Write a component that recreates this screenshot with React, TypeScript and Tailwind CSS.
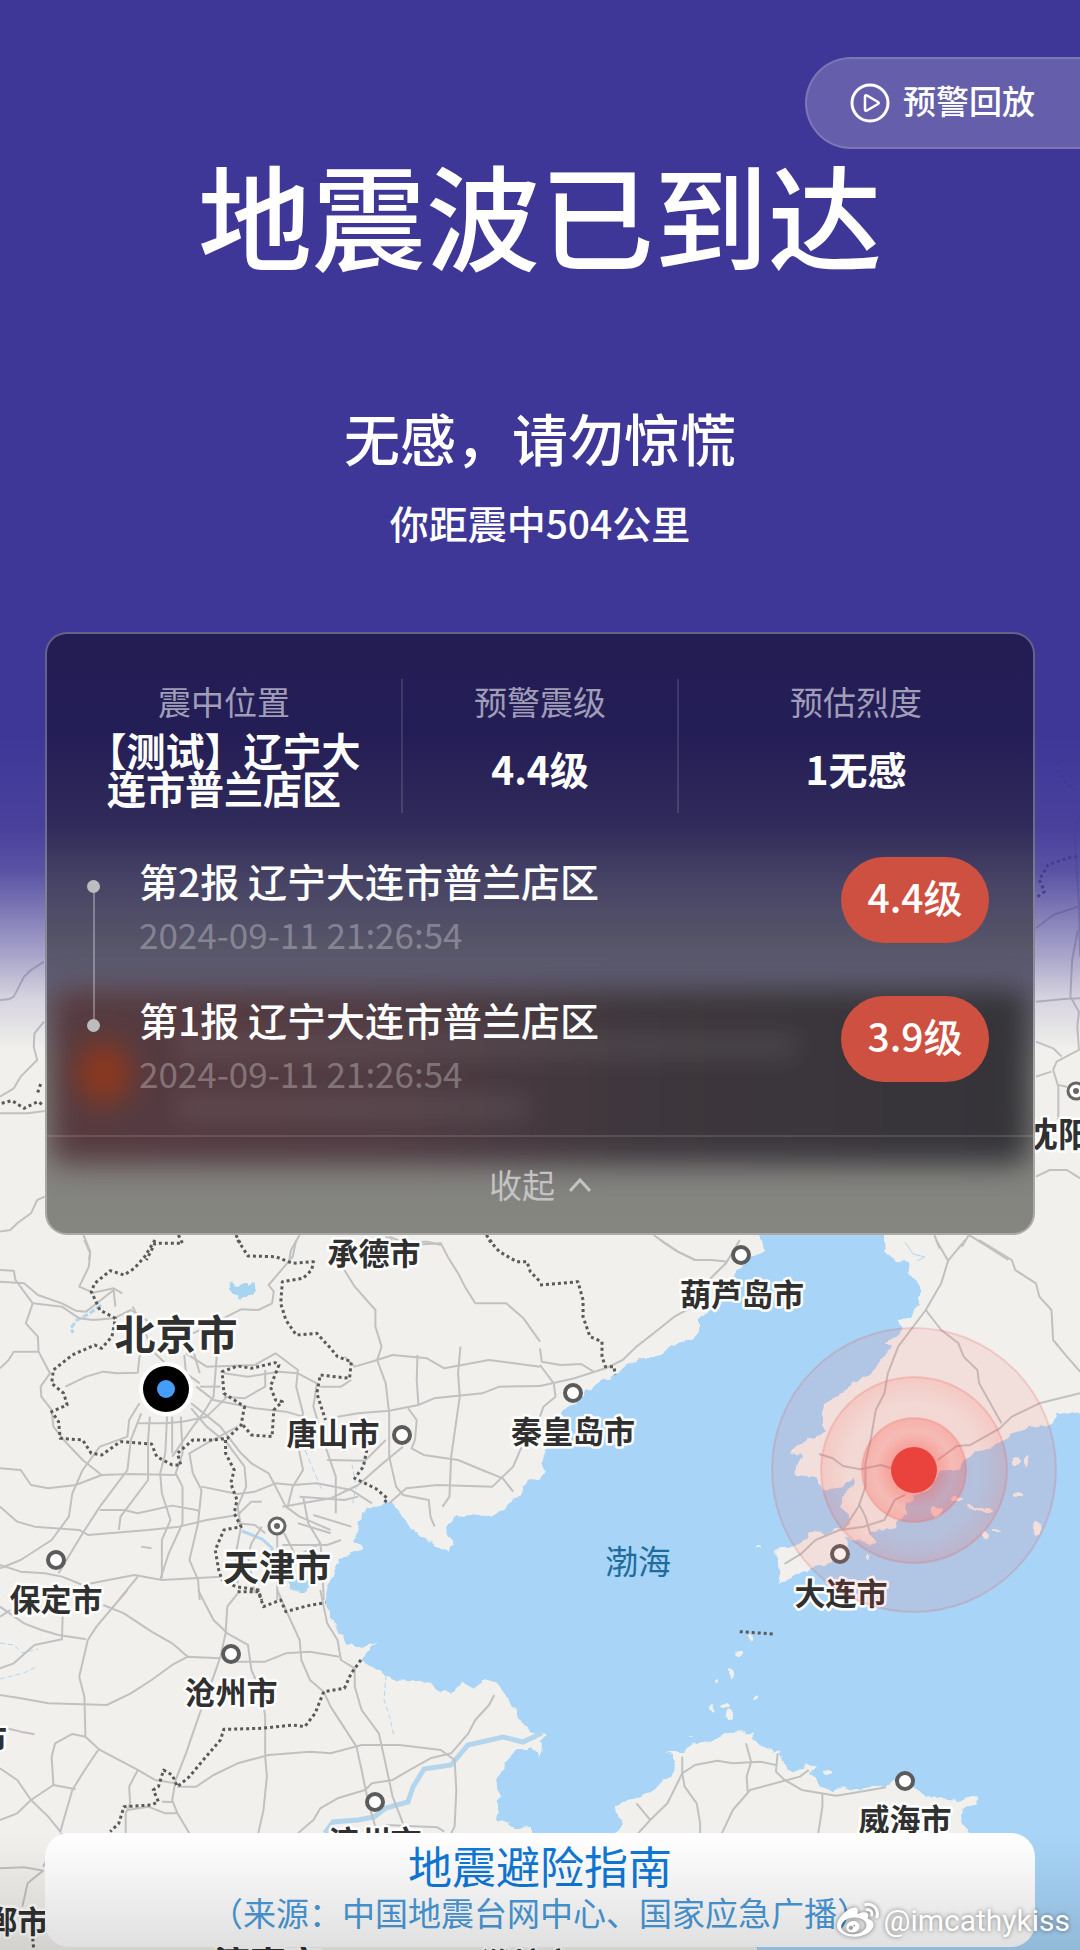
import React from "react";
import { FaWeibo } from "react-icons/fa";

type Sheet = { x: number; y: number; roads: string[]; borders: string[] };

/* Line work of the map, split into sheets that share one survey scale. */
const sheets: Sheet[] = [
  {
    x: 540,
    y: 620,
    roads: ["M1440 925L1490 885L1568 858", "M1572 560L1552 650L1565 850L1568 1010"],
    borders: ["M1445 830L1465 815L1450 780L1475 735L1530 715L1568 708", "M1500 430L1550 410", "M1505 450L1530 490L1550 510"],
  },
  {
    x: 0,
    y: 930,
    roads: [
      "M0 210L25 208L40 200L70 140L90 120L128 95",
      "M128 275L100 310L98 350L108 390L60 440L40 475L0 500",
      "M0 550L80 550L130 543",
      "M130 800L108 810L90 850L50 880L30 900L0 905",
      "M242 915L262 965L258 990",
      "M870 915L845 960L840 990",
      "M1120 920L1150 938L1240 935L1280 945",
    ],
    borders: ["M518 915L530 940L450 940L425 990", "M685 915L700 945", "M5 520L35 512L70 535L110 515L125 525", "M118 462L108 492", "M1412 915L1430 940"],
  },
  {
    x: 540,
    y: 930,
    roads: [
      "M1440 215L1520 207L1568 205",
      "M1562 0L1545 90L1540 200L1565 245L1560 290L1565 360L1500 395L1490 420L1505 470L1505 570",
      "M1440 335L1490 355L1515 380",
      "M1440 440L1485 425",
      "M1505 465L1530 470",
      "M1440 740L1480 720L1530 720L1568 745",
      "M330 915L360 938L400 965L450 990",
      "M1145 915L1160 955",
      "M1245 915L1300 950L1360 990",
      "M1245 915L1225 950",
    ],
    borders: [],
  },
  {
    x: 0,
    y: 1240,
    roads: [
      "M245 0L262 40L258 80L230 140L270 158L330 145L355 160",
      "M0 125L70 130L110 165L180 190L220 212L250 215L330 150L335 200",
      "M0 90L40 92L45 120L95 190L75 250L110 290L112 335L40 335L25 360L0 385",
      "M95 190L180 200L230 235L270 240L330 235L380 210L440 250",
      "M112 335L145 400L118 440L120 470L150 510L155 560L185 600L240 660L295 705L220 735L140 745L90 735L60 690L0 685",
      "M190 440L250 410L300 395L340 400L400 398L405 350L415 330",
      "M385 200L420 270L440 330L480 370",
      "M860 0L850 50L780 135L795 155L790 190L750 210L700 208L620 250L560 280",
      "M1000 90L1030 140L1090 210L1090 260L1108 320L1095 360L1120 430L1130 520L1130 650L1150 740L1170 765L1245 780L1250 830L1262 860",
      "M1130 -10L1190 15L1280 10L1300 50L1330 100L1350 140L1380 190L1470 190L1520 235L1568 305",
      "M1000 350L1030 380L1095 360L1140 345L1240 355L1290 385L1420 360L1568 380",
      "M1212 345L1210 420L1215 495",
      "M1337 320L1330 400L1335 470L1310 650L1305 770L1285 800",
      "M980 530L1040 520L1130 512L1215 495L1260 475L1400 460L1450 440L1568 438",
      "M1185 505L1210 540L1205 600L1195 625L1230 645L1330 660L1400 690L1460 715L1490 755",
      "M1170 620L1100 680L1040 735L960 775L820 800",
      "M1515 620L1490 680L1430 740L1270 735L1180 745L1130 790",
      "M540 340L600 380L740 375L800 340L865 390L860 440L880 520L860 590L880 690L850 740L835 800",
      "M650 400L720 410L810 395L865 400L920 430L910 500L945 620L975 710L975 820",
      "M770 390L770 440L710 475L650 470",
      "M930 440L990 440L1020 420",
      "M570 440L620 480L740 505L830 515L880 530",
      "M555 490L640 560L700 640L730 670L780 700L830 800L870 830L960 870",
      "M555 505L600 560L660 610L710 680L715 740L690 800L700 860L685 940L690 1030",
      "M630 340L620 470L590 520L560 560L520 620L500 650",
      "M690 560L600 610L550 640L560 700L585 750L575 850L550 960L575 1020L580 1080",
      "M435 530L430 600L430 720L350 830L345 870",
      "M410 520L380 600L370 690L290 800L240 880L170 1000",
      "M400 550L480 550L530 545L600 530L660 470",
      "M485 530L480 640L465 700L470 760L495 840L470 900L470 1015",
      "M525 530L530 640L510 700L530 740L530 850L490 940L465 1020",
      "M500 530L500 640",
      "M295 705L380 702L510 705",
      "M405 490L375 540L370 590L290 620L240 690L210 760L200 830L150 900L60 960L0 985",
      "M0 800L50 845L100 860L230 870L255 885L370 875L430 870L520 860L600 840L690 825L730 785L760 785",
      "M290 810L360 810L400 820L500 797L570 810L580 815",
      "M585 740L690 762L740 755L800 730L850 735L920 730L1020 750L1080 790",
      "M0 975L60 995L130 1000L180 1010L240 1035L390 1005L470 1020L640 1010",
      "M690 850L740 855L770 880",
      "M805 880L805 1080",
      "M825 880L860 950L930 910",
      "M865 850L930 870L960 880",
      "M880 770L895 850L930 910L935 960L940 1080",
      "M760 860L730 910L720 950L740 1060",
      "M820 915L950 915L990 900",
      "M870 770L1000 780L1040 770",
      "M910 825L1020 860",
      "M410 920L440 925",
      "M535 345L540 400L580 430",
      "M560 330L580 400",
      "M580 440L640 440",
      "M950 660L1060 662L1120 600",
      "M345 1080L400 1010",
    ],
    borders: [
      "M450 0L420 50L390 85L360 105L320 92L275 130L265 155L290 210L335 235L325 290L295 325L275 315L210 345L155 390L150 430L185 460L195 495L150 515L170 545L175 595L240 600L265 640L295 645L350 605L440 612L455 650L500 675L525 675L515 640L560 600L620 600L660 595L700 555L710 500L650 460L645 395L690 378L730 385L800 368L810 375L785 440L800 480L820 485L795 510L790 590L730 585L705 555",
      "M690 0L720 48L800 50L850 70L910 65L905 90L880 115L820 125L815 190L830 240L860 285L920 280L960 325L980 350L1020 365L1015 415L930 405L920 460L945 540",
      "M1420 0L1450 35L1500 65L1530 65L1540 95L1568 125",
      "M655 600L655 640L680 690L670 730L688 780L680 820L700 860L650 870L625 930L635 990L645 1020L685 1040L750 1050L760 1080",
      "M1065 630L1055 680L1030 715L1090 745L1125 775L1115 790",
    ],
  },
  {
    x: 540,
    y: 1240,
    roads: [
      "M350 0L400 35L450 60L500 60L545 65",
      "M580 0L540 70L500 110L420 210",
      "M435 205L390 230L330 280L280 320L240 360L190 385L100 415L0 438",
      "M0 325L5 365L60 375L120 372L155 395",
      "M0 375L40 430L45 470L10 500L0 530",
      "M1150 0L1185 62L1235 0",
      "M1185 62L1165 130L1120 210L1040 320L1010 400L1000 460L975 510L960 600L945 670L945 740L925 800L880 870",
      "M1120 210L1165 270L1215 310L1230 350L1270 390L1275 430L1340 550",
      "M1275 0L1370 60L1380 90L1440 130L1450 170L1485 210L1490 300L1530 350L1568 395",
      "M1155 660L1210 618L1250 615L1335 565L1370 530L1450 490L1568 460",
      "M810 642L850 655L880 678L930 688L990 675L1020 685",
      "M1060 765L1030 780L1000 840L940 860L870 870L800 900L760 940L710 972",
      "M925 790L945 830L960 885",
    ],
    borders: ["M0 135L60 130L110 125L125 180L125 230L145 290L180 305L180 350L190 380L215 380L218 405"],
  },
  {
    x: 0,
    y: 1590,
    roads: [
      "M370 0L280 110L255 150L230 260L245 320L248 440L290 480L400 540L450 570L510 580",
      "M0 50L70 100L120 120L170 135L250 148",
      "M0 235L40 220L100 165L180 148L182 75",
      "M0 80L30 60",
      "M0 315L60 325L140 340L310 345L380 310L440 270L500 225L545 200L640 205",
      "M300 45L360 70L440 125L500 160L545 200",
      "M575 0L620 90L660 130L720 165L730 240L760 310L770 380L770 500L775 560L765 660L750 730",
      "M690 10L660 50L655 130L640 200L620 260L580 370L540 490L510 570L500 630L515 670L550 730",
      "M680 215L770 215L830 190L900 185L985 200",
      "M805 0L830 60L870 150L875 210L900 270L940 305L960 350L1035 470L1050 540L1070 640L1090 710",
      "M930 0L950 100L980 150L990 210L1030 235L1030 290L1050 360L1100 430L1115 500L1140 620L1170 700",
      "M515 590L570 590L620 555L690 520L780 495L900 485L960 490L1050 465L1160 465L1280 480L1320 510L1325 600L1320 710L1310 730",
      "M1435 315L1420 345L1380 390L1360 430L1310 490L1250 505L1190 540L1140 570L1080 580L1060 600L980 625L930 655L910 690L865 730",
      "M0 535L50 570L90 630L140 680L175 725L210 600L240 550L285 480",
      "M0 690L50 670L90 630L155 585L220 598",
      "M155 585L150 500L160 460L210 432L248 440",
      "M400 540L375 590L378 640L365 670L365 730",
      "M370 660L430 650L480 670L515 670",
      "M470 635L500 636",
      "M0 835L70 832L125 842L80 880L65 950",
      "M180 730L125 830",
      "M20 415L60 425L100 433",
      "M1120 705L1270 712L1290 725",
    ],
    borders: [
      "M690 5L750 5L765 50L815 30L830 65L890 48L945 38",
      "M1048 210L1020 250L1000 295L940 305L915 370L885 410L850 405L760 415L650 418L640 450L590 510L550 560L515 590L500 555L475 540L460 590L445 600L460 635L440 645L360 650L345 700L320 725",
      "M95 1045L98 1080",
    ],
  },
  {
    x: 540,
    y: 1590,
    roads: [
      "M413 500L413 550L370 640L320 690L285 730",
      "M280 640L320 690",
      "M413 550L450 525L515 512L560 520L640 515L685 525",
      "M413 550L420 590L455 640L465 700L465 730",
      "M598 460L613 515L600 560L603 605",
      "M690 490L685 545L710 570L760 600L860 617L930 605L1005 592",
      "M780 540L755 560L610 600L560 660L528 730",
      "M820 610L820 650L808 730",
    ],
    borders: ["M580 125L680 132"],
  },
];

const sea =
  "M760 1200L760 1240L764 1252L747 1260L736 1273L728 1292L712 1307L698 1320L698 1332L691 1340L674 1345L660 1355L640 1361L623 1368L616 1375L595 1385L585 1392L578 1403L561 1410L554 1427L545 1453L540 1463L545 1472L540 1478L528 1482L516 1498L496 1515L479 1517L454 1515L451 1523L446 1530L454 1545L447 1552L430 1542L410 1530L401 1513L389 1503L372 1507L360 1513L358 1533L352 1540L365 1550L341 1558L336 1567L331 1583L325 1600L331 1617L348 1645L362 1648L378 1640L367 1652L362 1660L372 1668L386 1675L396 1680L420 1682L437 1687L451 1695L460 1683L473 1688L484 1680L499 1685L508 1700L518 1712L523 1727L532 1733L540 1730L547 1737L541 1741L540 1757L530 1748L517 1748L506 1763L496 1778L499 1803L496 1820L510 1823L517 1828L530 1827L534 1840L534 1960L1100 1960L1100 1200Z";
const shandong =
  "M606 1840L614 1833L623 1823L614 1808L630 1800L654 1790L669 1777L676 1763L673 1755L665 1753L683 1753L692 1744L712 1740L728 1733L753 1732L755 1740L766 1748L778 1752L781 1763L791 1770L807 1769L805 1762L815 1767L810 1773L822 1787L833 1792L843 1787L850 1790L888 1785L895 1780L919 1790L927 1797L960 1800L976 1796L979 1802L965 1807L962 1820L969 1833L960 1870L757 1930L757 1960L520 1960L520 1900Z";
const liaodong =
  "M883 1200L883 1240L884 1250L895 1262L910 1263L908 1272L920 1287L920 1303L912 1315L896 1320L903 1327L898 1337L886 1342L891 1348L881 1360L872 1373L850 1387L838 1395L824 1403L822 1417L828 1432L809 1440L793 1448L791 1453L802 1455L795 1470L797 1475L815 1477L824 1490L843 1487L853 1477L855 1485L846 1493L840 1503L846 1513L850 1523L843 1530L826 1533L809 1532L803 1542L788 1548L776 1552L778 1565L781 1583L791 1578L802 1570L833 1563L850 1553L845 1537L864 1542L872 1548L877 1542L871 1533L896 1527L898 1520L907 1513L905 1503L922 1495L936 1480L939 1472L960 1470L965 1460L977 1452L998 1443L1015 1432L1039 1427L1053 1423L1057 1413L1067 1415L1100 1408L1100 1200Z";
const islands: [number, number, number, number][] = [
  [1016, 1460, 5, 5], [957, 1499, 6, 3], [975, 1508, 8, 2], [986, 1510, 8, 2], [936, 1511, 6, 5], [1037, 1528, 5, 6],
  [1018, 1495, 4, 2], [1026, 1461, 2, 5], [996, 1530, 4, 2], [984, 1535, 3, 3], [868, 1558, 2, 4], [759, 1547, 2, 1],
  [739, 1652, 4, 3], [750, 1639, 2, 3], [731, 1674, 3, 5], [713, 1708, 3, 3], [725, 1706, 3, 2], [728, 1715, 4, 5],
  [755, 1698, 2, 2], [716, 1680, 1, 2], [691, 1738, 2, 1], [828, 1773, 3, 2],
];

const cities: { name: string; x: number; y: number; size?: number; anchor?: "start" | "end" }[] = [
  { name: "承德市", x: 374, y: 1253 },
  { name: "北京市", x: 176, y: 1334, size: 41 },
  { name: "唐山市", x: 333, y: 1433 },
  { name: "秦皇岛市", x: 573, y: 1431 },
  { name: "葫芦岛市", x: 742, y: 1294 },
  { name: "天津市", x: 277, y: 1567, size: 36 },
  { name: "保定市", x: 56, y: 1599 },
  { name: "沧州市", x: 231, y: 1692 },
  { name: "滨州市", x: 375, y: 1841 },
  { name: "大连市", x: 841, y: 1593 },
  { name: "威海市", x: 905, y: 1819 },
  { name: "沈阳市", x: 1024, y: 1134, size: 34, anchor: "start" },
  { name: "衡水市", x: 7, y: 1738, anchor: "end" },
  { name: "邯郸市", x: 2, y: 1921 },
  { name: "济南市", x: 268, y: 1963, size: 36 },
  { name: "潍坊市", x: 528, y: 1963 },
];
const dots: [number, number][] = [
  [402, 1435], [573, 1393], [741, 1255], [840, 1554], [56, 1560], [231, 1654], [375, 1802], [905, 1781],
];
const capitals: [number, number][] = [[277, 1526], [1076, 1091]];

function MapView() {
  return (
    <svg
      className="absolute inset-0 h-full w-full"
      viewBox="0 0 1080 1950"
      preserveAspectRatio="xMidYMin slice"
      fontFamily='"Noto Sans CJK SC", sans-serif'
      role="img"
      aria-label="震中地图"
    >
      <defs>
        <filter id="coast" x="0" y="0" width="100%" height="100%">
          <feTurbulence type="fractalNoise" baseFrequency="0.09" numOctaves="2" seed="4" />
          <feDisplacementMap in="SourceGraphic" scale="9" xChannelSelector="R" yChannelSelector="G" />
        </filter>
        <radialGradient id="wave">
          <stop offset="0" stopColor="#ff3b30" stopOpacity="0.6" />
          <stop offset="0.45" stopColor="#ff4a40" stopOpacity="0.34" />
          <stop offset="0.75" stopColor="#ff4a40" stopOpacity="0.18" />
          <stop offset="1" stopColor="#ff5a50" stopOpacity="0.3" />
        </radialGradient>
        <radialGradient id="waveMid">
          <stop offset="0" stopColor="#ff3b30" stopOpacity="0.12" />
          <stop offset="0.7" stopColor="#ff6055" stopOpacity="0.05" />
          <stop offset="1" stopColor="#ff5a50" stopOpacity="0.17" />
        </radialGradient>
      </defs>
      <rect width="1080" height="1950" fill="#f1f0ec" />
      <g filter="url(#coast)">
        <path d={sea} fill="#a7d4f7" />
        <path d={shandong} fill="#f1f0ec" />
        <path d={liaodong} fill="#f1f0ec" />
        {islands.map(([x, y, rx, ry]) => (
          <ellipse key={`${x}-${y}`} cx={x} cy={y} rx={rx} ry={ry} fill="#f1f0ec" />
        ))}
        <path d="M231 1281l5 5 7-3 5 3 8-3-2 10-6 5-4-2-5 4-2-6-8-3z" fill="#a7d4f0" />
        <path d="M285 1580l5 8 12 3 8-5-2-6-8 2-7-4z" fill="#a7d4f0" />
      </g>
      <g fill="none" stroke="#b3d6ee">
        <path d="M101 1305l-12 9-12 6-6 8 2 5" strokeWidth="3" strokeDasharray="6 2" />
        <path d="M242 1531l20 8 10 9 2 16" strokeWidth="3" />
        <path d="M305 1450l10 24 7 16" strokeWidth="1" strokeDasharray="6 3" />
        <path d="M352 1465l4 22-4 20" strokeWidth="1" strokeDasharray="4 3" />
        <path d="M0 1643l14 2 8 8 16-4M0 1679l24-6 14-7" strokeWidth="1" strokeDasharray="5 3" />
        <path d="M386 1675l-2 25 6 18 4 18" strokeWidth="1" strokeDasharray="5 3" />
        <path d="M905 1242l8 12 12 3-8 4" strokeWidth="1" />
        <path
          d="M325 1833L333 1822L358 1820L374 1817L386 1808L408 1802L413 1787L424 1769L451 1765L468 1745L503 1737L523 1742L542 1733"
          strokeWidth="5"
        />
      </g>
      {sheets.map((s) => (
        <g key={`${s.x}-${s.y}`} transform={`translate(${s.x} ${s.y}) scale(0.3444 0.3333)`} fill="none" strokeLinejoin="round">
          {s.roads.map((d) => (
            <path key={d} d={d} stroke="#c2c1c2" strokeWidth="2" vectorEffect="non-scaling-stroke" />
          ))}
          {s.borders.map((d) => (
            <path key={d} d={d} stroke="#5a5a5a" strokeWidth="3" strokeDasharray="3 3" vectorEffect="non-scaling-stroke" />
          ))}
        </g>
      ))}
      {dots.map(([x, y]) => (
        <circle key={`${x}-${y}`} cx={x} cy={y} r="8" fill="#fff" stroke="#5b5b5b" strokeWidth="4" />
      ))}
      {capitals.map(([x, y]) => (
        <g key={`${x}-${y}`}>
          <circle cx={x} cy={y} r="8" fill="#fff" stroke="#666" strokeWidth="3" />
          <circle cx={x} cy={y} r="3" fill="#666" />
        </g>
      ))}
      {cities.map((c) => (
        <text
          key={c.name}
          x={c.x}
          y={c.y}
          dy="0.38em"
          fontSize={c.size ?? 31}
          fontWeight="600"
          textAnchor={c.anchor ?? "middle"}
          fill="#303030"
          stroke="#fff"
          strokeWidth="5"
          strokeLinejoin="round"
          paintOrder="stroke"
        >
          {c.name}
        </text>
      ))}
      <text x="638" y="1561" dy="0.38em" fontSize="33" textAnchor="middle" fill="#1f6c9c">
        渤海
      </text>
      <circle cx="166" cy="1389" r="27" fill="#fff" />
      <circle cx="166" cy="1389" r="23" fill="#000" />
      <circle cx="166" cy="1389" r="9" fill="#459dfb" />
      <g stroke="#e8504a" strokeOpacity="0.2" strokeWidth="2">
        <circle cx="914" cy="1470" r="142" fill="#ff5a50" fillOpacity="0.11" />
        <circle cx="914" cy="1470" r="93" fill="url(#waveMid)" />
        <circle cx="914" cy="1470" r="52" fill="url(#wave)" />
      </g>
      <circle cx="914" cy="1470" r="23" fill="#ea433d" />
    </svg>
  );
}

const facts = [
  { label: "震中位置", value: "【测试】辽宁大连市普兰店区" },
  { label: "预警震级", value: "4.4级" },
  { label: "预估烈度", value: "1无感" },
];

const reports = [
  { title: "第2报 辽宁大连市普兰店区", time: "2024-09-11 21:26:54", level: "4.4级" },
  { title: "第1报 辽宁大连市普兰店区", time: "2024-09-11 21:26:54", level: "3.9级" },
];

function QuakeCard() {
  return (
    <section className="relative mx-[45px] mt-[79px] overflow-hidden rounded-[22px] border-2 border-white/30 bg-[linear-gradient(to_bottom,#231d54_0%,#241e56_17%,#302b5a_32%,#484566_42%,#575568_52%,#605e74_58%,#7c7c7a_72%,#868681_100%)] bg-origin-border">
      <div className="pointer-events-none absolute inset-x-1 top-[354px] h-[176px] rounded-2xl bg-[linear-gradient(to_right,#573b40_0%,#4f3b42_35%,#3e373d_60%,#353439_100%)] blur-[14px]" />
      <div className="pointer-events-none absolute top-[400px] left-[130px] h-[24px] w-[620px] bg-white/8 blur-[12px]" />
      <div className="pointer-events-none absolute top-[462px] left-[130px] h-[24px] w-[350px] bg-white/8 blur-[12px]" />
      <div className="pointer-events-none absolute top-[408px] left-[30px] h-[62px] w-[54px] rounded-full bg-[#8c381f] blur-[14px]" />

      <dl className="relative grid grid-cols-[354fr_276fr_356fr] pt-[45px] text-center">
        {facts.map((f, i) => (
          <div key={f.label} className={"flex h-[134px] flex-col px-8 " + (i > 0 ? "border-l-2 border-white/12" : "")}>
            <dt className="text-[33px] leading-[44px] text-[#a09db8]">{f.label}</dt>
            <dd className="flex flex-1 items-center justify-center text-[39px] leading-[38px] font-semibold text-white">{f.value}</dd>
          </div>
        ))}
      </dl>

      <ol className="relative mt-[40px] pr-[44px] pb-1 pl-[40px]">
        {reports.map((r, i) => (
          <li key={r.title} className="flex h-[139px] items-start">
            <div className="flex w-[13px] flex-col items-center self-stretch pt-[27px]">
              <span className="size-[13px] shrink-0 rounded-full bg-[#bdbdc0]" />
              {i < reports.length - 1 && <span className="-mb-[27px] w-[2px] flex-1 bg-white/30" />}
            </div>
            <div className="ml-[39px] flex-1">
              <p className="text-[39px] leading-[54px] font-medium text-white">{r.title}</p>
              <time className="block text-[35px] leading-[54px] text-white/30">{r.time}</time>
            </div>
            <span className="mt-1 flex h-[86px] w-[148px] items-center justify-center rounded-full bg-[#ce5040] pb-2 text-[39px] leading-none font-medium text-white">
              {r.level}
            </span>
          </li>
        ))}
      </ol>

      <button type="button" className="relative flex h-[98px] w-full items-center justify-center gap-[14px] border-t-2 border-white/12 text-[33px] text-[#c3c3c3]">
        收起
        <svg className="h-[14px] w-[22px]" viewBox="0 0 22 14" fill="none" stroke="currentColor" strokeWidth="3" aria-hidden="true">
          <path d="M1 13L11 2L21 13" />
        </svg>
      </button>
    </section>
  );
}

export default function App() {
  return (
    <main className="relative flex min-h-screen flex-col overflow-hidden bg-[#f1f0ec] font-['Noto_Sans_CJK_SC',sans-serif]">
      <MapView />
      <div className="absolute inset-x-0 top-0 h-[1050px] bg-[linear-gradient(to_bottom,#3f3797_0%,#3f3797_70%,#3f3797f0_79%,#3f3797d8_83%,#3f3797a0_87%,#3f379768_91%,#3f379728_95%,#3f379700_100%)]" />
      <div className="pointer-events-none absolute inset-x-0 bottom-0 z-10 h-[116px] bg-[linear-gradient(to_bottom,transparent,#00000020)]" />

      <header className="relative flex flex-col items-center pt-[57px] text-white">
        <button
          type="button"
          className="flex h-[92px] w-[275px] items-center gap-[13px] self-end rounded-l-full border-2 border-r-0 border-white/15 bg-white/20 pl-[43px] text-[33px] font-medium"
        >
          <svg className="size-[40px]" viewBox="0 0 40 40" fill="none" stroke="currentColor" strokeWidth="3" aria-hidden="true">
            <circle cx="20" cy="20" r="18" />
            <path d="M15 13.500Q15 11.500 17 12.500L28 19Q29.500 20 28 21L17 27.500Q15 28.500 15 26.500Z" strokeWidth="2.500" strokeLinejoin="round" />
          </svg>
          <span className="pb-1">预警回放</span>
        </button>
        <h1 className="text-[114px] leading-[128px] font-medium">地震波已到达</h1>
        <h2 className="mt-[122px] text-[56px] leading-[76px] font-medium">无感，请勿惊慌</h2>
        <p className="mt-[16px] text-[39px] leading-[62px] font-medium">你距震中504公里</p>
      </header>

      <QuakeCard />

      <a href="#guide" className="relative mx-[45px] mt-auto mb-[3px] rounded-[24px] bg-white pt-[7px] pb-3 text-center">
        <span className="block text-[44px] leading-[50px] text-[#0f78d8]">地震避险指南</span>
        <span className="block text-[33px] leading-[45px] text-[#4a9bdb]">（来源：中国地震台网中心、国家应急广播）</span>
      </a>

      <div className="absolute right-[10px] bottom-[8px] z-20 flex items-center gap-[4px] font-['Roboto',sans-serif] text-[30px] leading-[40px] text-white [text-shadow:0_0_4px_#00000080]">
        <FaWeibo className="size-[42px] drop-shadow-[0_0_2px_#00000080]" aria-hidden="true" />
        @imcathykiss
      </div>
    </main>
  );
}
